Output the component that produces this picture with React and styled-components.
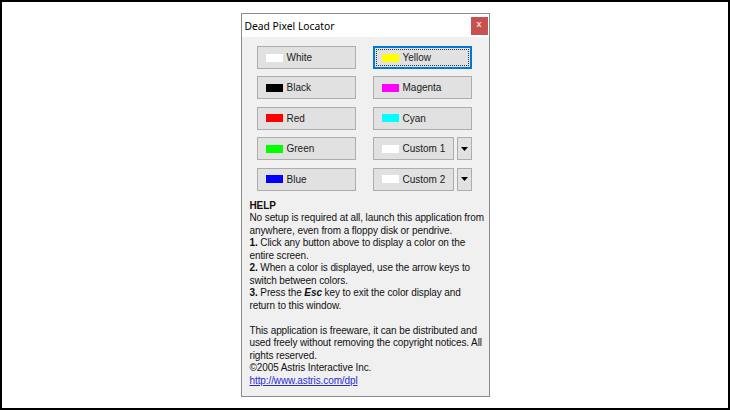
import React from 'react';
import styled, { createGlobalStyle } from 'styled-components';

const GlobalStyle = createGlobalStyle`
  html, body {
    margin: 0;
    padding: 0;
    background: #ffffff;
  }
  * {
    box-sizing: border-box;
  }
`;

const Page = styled.div`
  width: 730px;
  height: 410px;
  border: 2px solid #000;
  background: #fff;
  display: flex;
  justify-content: center;
  align-items: flex-start;
  padding-top: 11px;
`;

const Window = styled.div`
  width: 249px;
  height: 384px;
  border: 1px solid #8c8c8c;
  background: #f0f0f0;
  display: flex;
  flex-direction: column;
  font-family: "Liberation Sans", Arial, sans-serif;
  color: #000;
`;

const TitleBar = styled.div`
  height: 23px;
  background: #fff;
  display: flex;
  align-items: center;
  justify-content: space-between;
  padding: 0 1px 0 3px;
`;

const Title = styled.span`
  font-family: "Noto Sans", "Liberation Sans", sans-serif;
  font-size: 10.3px;
  color: #000;
`;

const Close = styled.div`
  width: 17px;
  height: 18px;
  background: #c75050;
  color: #f6dede;
  font-size: 9px;
  font-weight: bold;
  display: flex;
  align-items: center;
  justify-content: center;
  line-height: 1;
  padding-bottom: 2px;
`;

const Body = styled.div`
  flex: 1;
  padding: 9px 8px 0 8px;
  display: flex;
  flex-direction: column;
`;

const Grid = styled.div`
  display: grid;
  grid-template-columns: 99px 99px;
  column-gap: 17px;
  row-gap: 7.4px;
  padding: 0 7px;
`;

const Btn = styled.div`
  position: relative;
  height: 23px;
  flex: 1;
  background: #e1e1e1;
  border: 1px solid ${({ $focus }) => ($focus ? '#0078d7' : '#adadad')};
  box-shadow: ${({ $focus }) => ($focus ? 'inset 0 0 0 1px #0078d7' : 'none')};
  display: flex;
  align-items: center;
  gap: 4px;
  padding-left: 8px;
  font-size: 10px;
  color: #1a1a1a;

  &::after {
    content: '';
    display: ${({ $focus }) => ($focus ? 'block' : 'none')};
    position: absolute;
    inset: 2px;
    border: 1px dotted #333;
  }
`;

const Swatch = styled.span`
  width: 17px;
  height: 8px;
  background: ${({ $c }) => $c};
`;

const Split = styled.div`
  display: flex;
  gap: 3px;
`;

const Drop = styled.div`
  width: 15px;
  height: 23px;
  background: #e1e1e1;
  border: 1px solid #adadad;
  display: flex;
  align-items: center;
  justify-content: center;
`;

const Help = styled.div`
  margin-top: 9px;
  font-size: 10px;
  letter-spacing: -0.1px;
  line-height: 12.5px;
  white-space: nowrap;
  color: #111;
`;

const Line = styled.div`
  height: 12.5px;
`;

const B = styled.b`
  font-weight: bold;
`;

const Esc = styled.b`
  font-weight: bold;
  font-style: italic;
`;

const Link = styled.a`
  color: #2a2ad0;
  text-decoration: underline;
`;

const Arrow = () => (
  <svg width="7" height="4" viewBox="0 0 7 4">
    <path d="M0 0h7L3.5 4z" fill="#000" />
  </svg>
);

const ColorButton = ({ color, label, focus }) => (
  <Btn $focus={focus}>
    <Swatch $c={color} />
    {label}
  </Btn>
);

const CustomButton = ({ label }) => (
  <Split>
    <ColorButton color="#fff" label={label} />
    <Drop>
      <Arrow />
    </Drop>
  </Split>
);

const App = () => (
  <>
    <GlobalStyle />
    <Page>
      <Window>
        <TitleBar>
          <Title>Dead Pixel Locator</Title>
          <Close>x</Close>
        </TitleBar>
        <Body>
          <Grid>
            <ColorButton color="#ffffff" label="White" />
            <ColorButton color="#ffff00" label="Yellow" focus />
            <ColorButton color="#000000" label="Black" />
            <ColorButton color="#ff00ff" label="Magenta" />
            <ColorButton color="#ff0000" label="Red" />
            <ColorButton color="#00ffff" label="Cyan" />
            <ColorButton color="#00ff00" label="Green" />
            <CustomButton label="Custom 1" />
            <ColorButton color="#0000ff" label="Blue" />
            <CustomButton label="Custom 2" />
          </Grid>
          <Help>
            <Line><B>HELP</B></Line>
            <Line>No setup is required at all, launch this application from</Line>
            <Line>anywhere, even from a floppy disk or pendrive.</Line>
            <Line><B>1.</B> Click any button above to display a color on the</Line>
            <Line>entire screen.</Line>
            <Line><B>2.</B> When a color is displayed, use the arrow keys to</Line>
            <Line>switch between colors.</Line>
            <Line><B>3.</B> Press the <Esc>Esc</Esc> key to exit the color display and</Line>
            <Line>return to this window.</Line>
            <Line />
            <Line>This application is freeware, it can be distributed and</Line>
            <Line>used freely without removing the copyright notices. All</Line>
            <Line>rights reserved.</Line>
            <Line>©2005 Astris Interactive Inc.</Line>
            <Line><Link href="#">http://www.astris.com/dpl</Link></Line>
          </Help>
        </Body>
      </Window>
    </Page>
  </>
);

export default App;
